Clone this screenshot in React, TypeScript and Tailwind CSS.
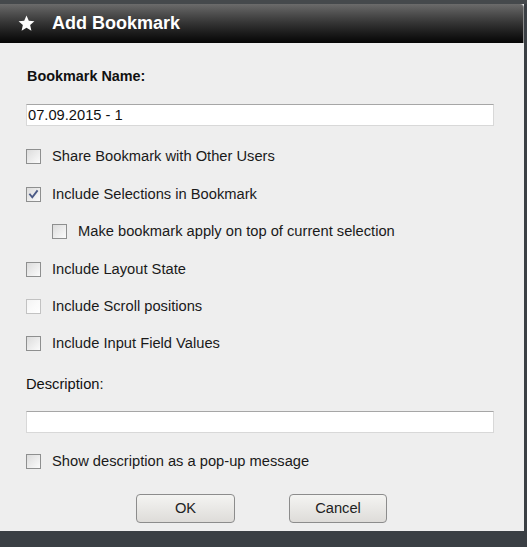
import React from "react";

function Box({ checked = false, faint = false }: { checked?: boolean; faint?: boolean }) {
  return (
    <div
      className={
        "relative w-[15px] h-[15px] shrink-0 border " +
        (faint
          ? "border-[#c2c2c2] bg-gradient-to-br from-[#f4f4f4] to-[#ffffff]"
          : "border-[#8e8f8f] bg-gradient-to-br from-[#dcdcdc] to-[#fbfbfb]")
      }
    >
      {checked && (
        <svg viewBox="0 0 13 13" className="absolute left-0 top-0 w-[13px] h-[13px]">
          <path d="M3 6.5 L5.3 9.3 L10 3.2" stroke="#4b5a86" strokeWidth="1.9" fill="none" strokeLinecap="square" />
        </svg>
      )}
    </div>
  );
}

function Row({ label, checked, faint, indent, className = "" }: { label: string; checked?: boolean; faint?: boolean; indent?: boolean; className?: string }) {
  return (
    <div className={"flex items-center h-[20px] " + (indent ? "pl-[26px] " : "") + className}>
      <Box checked={checked} faint={faint} />
      <span className="ml-[11px] text-[14.7px] text-[#1a1a1a]">{label}</span>
    </div>
  );
}

export default function App() {
  return (
    <div
      className="w-[527px] h-[547px] bg-[#3a3f44] overflow-hidden"
      style={{ fontFamily: '"Liberation Sans", Arial, sans-serif' }}
    >
      <div className="h-[4px] bg-[#45494c]" />
      <div className="w-[524px] flex flex-col bg-[#eeeeee]">
        <div className="h-[39px] flex items-center bg-gradient-to-b from-[#6b6b6b] via-[#333333] to-[#060606] rounded-tr-[4px] border-r border-[#8a8a8a]">
          <svg viewBox="0 0 24 24" className="ml-[17px] w-[19px] h-[19px]">
            <path d="M12 2 L14.9 8.6 L22 9.3 L16.6 14 L18.2 21 L12 17.3 L5.8 21 L7.4 14 L2 9.3 L9.1 8.6 Z" fill="#ffffff" />
          </svg>
          <span className="ml-[16px] text-[18px] font-bold text-white">Add Bookmark</span>
        </div>
        <div className="flex flex-col pl-[26px] pr-[30px] pb-[8px]">
          <div className="mt-[25px] h-[16px] leading-[16px] text-[14.4px] font-bold text-[#111] pl-[1px]">Bookmark Name:</div>
          <div className="mt-[20px] w-[468px] h-[22px] bg-white border border-[#d8d8d8] border-t-[#a6a6a6] flex items-center px-[1px] text-[14.7px] text-[#111]">
            07.09.2015 - 1
          </div>
          <Row className="mt-[20px]" label="Share Bookmark with Other Users" />
          <Row className="mt-[18px]" label="Include Selections in Bookmark" checked />
          <Row className="mt-[17px]" indent label="Make bookmark apply on top of current selection" />
          <Row className="mt-[18px]" label="Include Layout State" />
          <Row className="mt-[17px]" label="Include Scroll positions" faint />
          <Row className="mt-[17px]" label="Include Input Field Values" />
          <div className="mt-[23px] h-[16px] leading-[16px] text-[14.7px] text-[#111]">Description:</div>
          <div className="mt-[19px] w-[468px] h-[22px] bg-white border border-[#d8d8d8] border-t-[#a6a6a6]" />
          <Row className="mt-[18px]" label="Show description as a pop-up message" />
          <div className="mt-[23px] flex pl-[110px] gap-[54px]">
            <button className="w-[99px] h-[29px] rounded-[4px] border border-[#8c8c8c] bg-gradient-to-b from-[#f4f4f2] to-[#dedcd9] text-[14.7px] text-[#222]">OK</button>
            <button className="w-[98px] h-[29px] rounded-[4px] border border-[#8c8c8c] bg-gradient-to-b from-[#f4f4f2] to-[#dedcd9] text-[14.7px] text-[#222]">Cancel</button>
          </div>
        </div>
      </div>
    </div>
  );
}
